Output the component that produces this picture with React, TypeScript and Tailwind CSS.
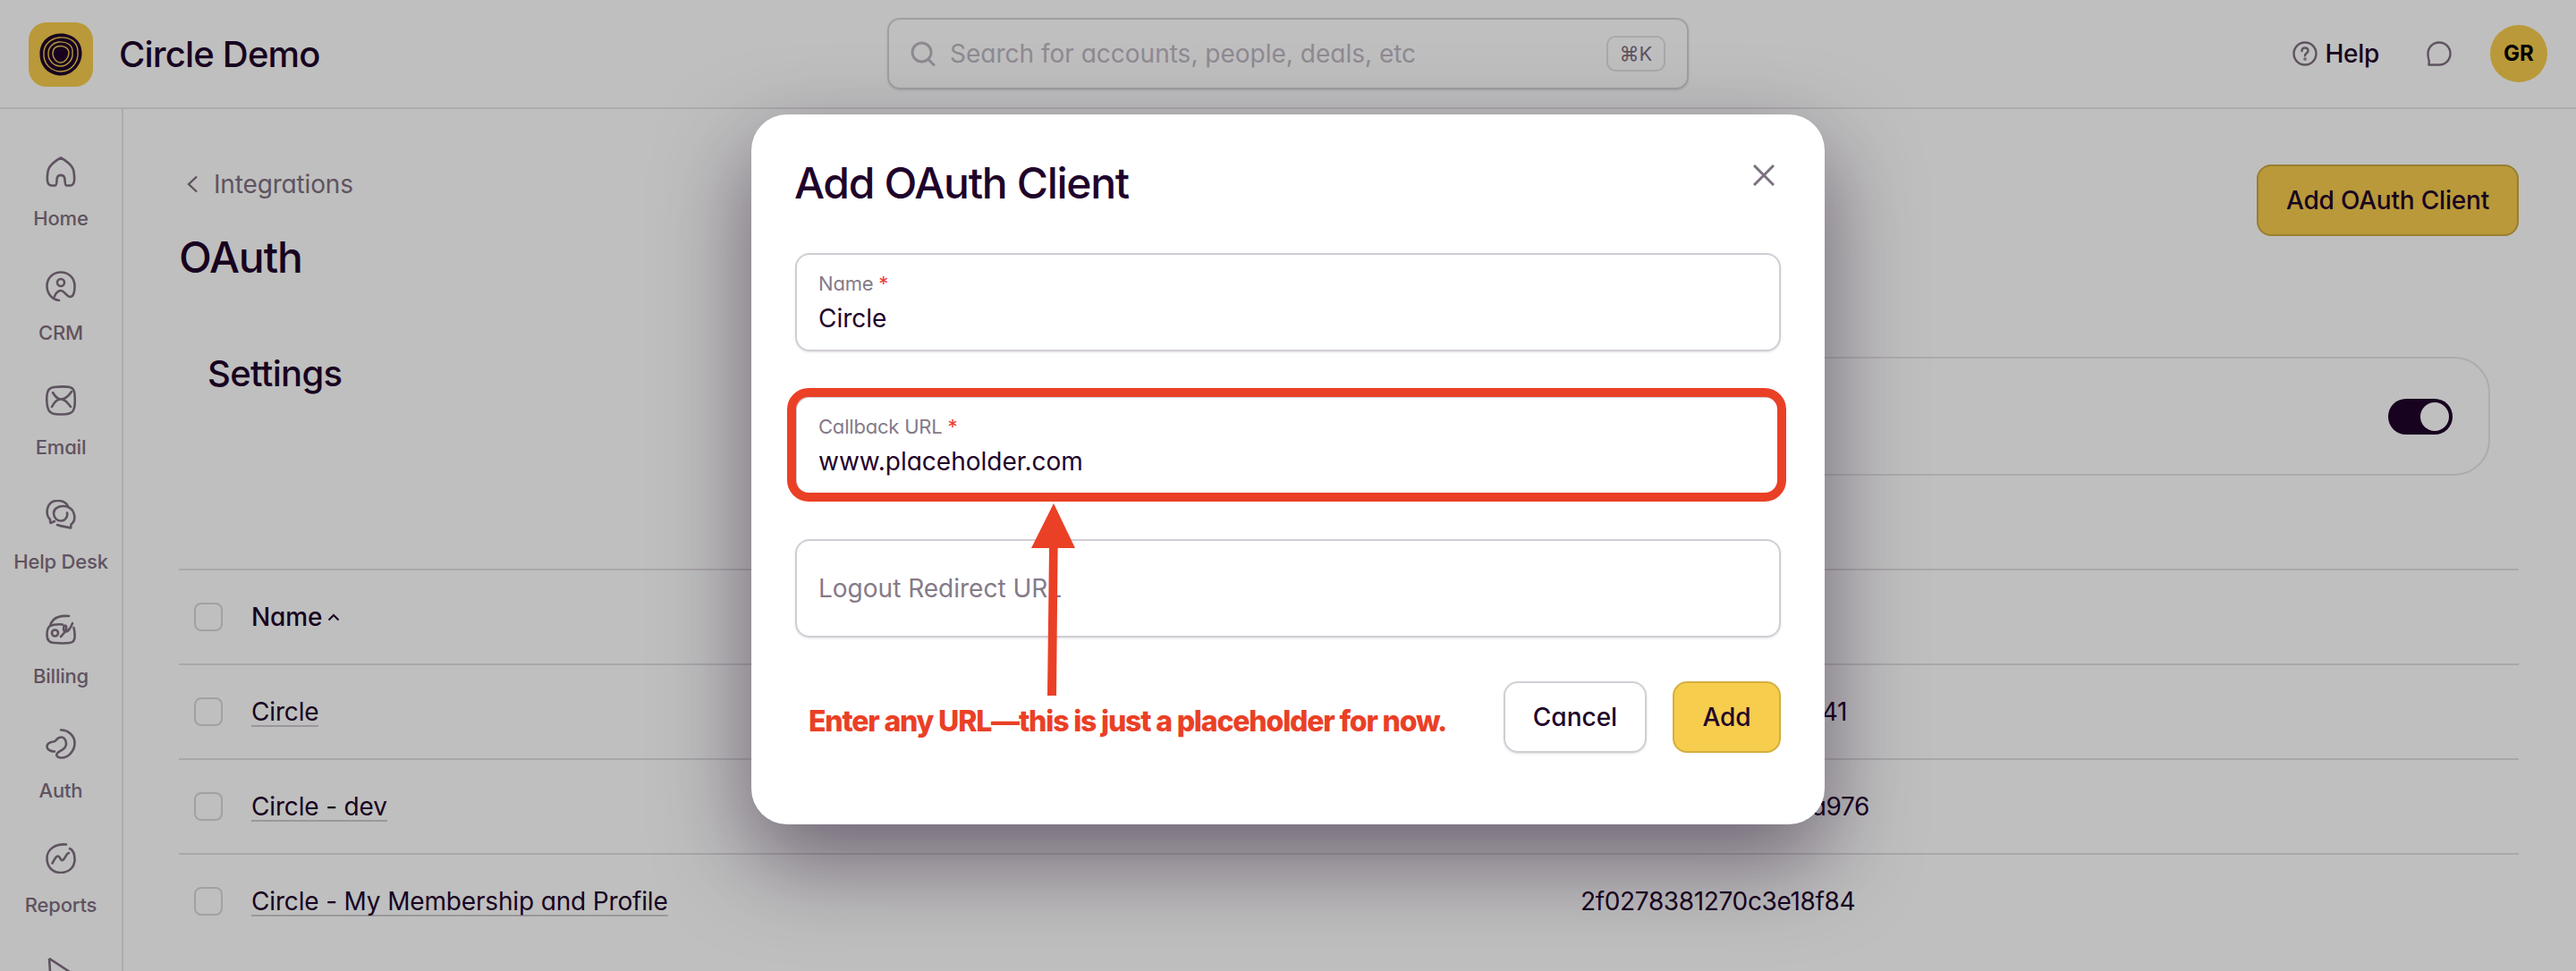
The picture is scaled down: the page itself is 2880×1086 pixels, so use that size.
import { ReactNode } from 'react';

const ICONS: Record<string, ReactNode> = {
  Home: (
    <path d="M17 1.5C12 4 3.5 10 2.5 17C1.5 24 1 32 6 32.5H10.5C13 32.5 12 26 13 23.5C14 20 20 20 21 23.5C22 26 21 32.5 23.5 32.5H28C33 32 32.5 24 31.5 17C30.5 10 22 4 17 1.5Z" />
  ),
  CRM: (
    <>
      <path d="M15 33C7 32 1.5 25 1.5 17C1.5 8 8 1.5 17 1.5C26 1.5 32.5 8 32.5 17C32.5 24 31 29.5 27 29C23 28.5 21 22 17 22C14 22 11 25 10 28.5" />
      <circle cx="17" cy="13" r="4" />
    </>
  ),
  Email: (
    <>
      <path d="M9 2C14 1.5 22 1 27 2C31 3 32.5 7 32.5 11C33 17 33 24 31 28C29 32 24 32.5 17 32.5C10 32.5 6 32 3.5 28C1.5 24 1 17 1.5 11C2 6 4 2.5 9 2Z" />
      <path d="M8 8C11 13 13 15.5 17 15.5C21 15.5 25 13 29 7M7 24C9 20 12 15.5 17 15.5C22 15.5 25 20 28 24" />
    </>
  ),
  'Help Desk': (
    <>
      <path d="M5 22C2 19 1 15 2 10C3.5 4 8 1 13 1C18 1 23 3 25 7M5 22C5 23.5 5 25 5.5 26L10 24" />
      <path d="M13 28C18 30 23 30 28 31.5C28.5 30 28.5 29 28.5 27.5C32 25 33 20 31.5 15C30 10 25 7 20 7C14 7 9 10 9 15C9 20 13 24 18 23.5C22 23 25 19 24 14.5" />
    </>
  ),
  Billing: (
    <>
      <path d="M26 2C20 1.5 13 2 9 6C7 8 5.5 11 5 13C2 15 1.5 19 1.5 23C1.5 28 4 32 10 32C15 32.5 23 32.5 27 32C31 31.5 33 28 32.5 23C32.5 20 32 17 31.5 15" />
      <circle cx="10.5" cy="21" r="3.5" />
      <path d="M5 13C10 11 14 11 19 11.5M17 25C21 21 24 16 23 13.5C22 11.5 20 13 20 16C20 20 24 21 27 16C28.5 13.5 29.5 12 30 10" />
    </>
  ),
  Auth: (
    <path d="M17 1.5C24 1 32.5 7 32.5 16C32.5 25 25 33 17 32.5C12 32 11 29 14 26.5C17 24 23 23 23 17C23 12 20 8 15 10C12 11 12 14 9 14.5C5 15 1.5 17 1.5 20C1.5 23 5 25.5 10 25.5" />
  ),
  Reports: (
    <>
      <path d="M23 1.5C12 0.5 1.5 6 1.5 17C1.5 27 8 33 17 33C26 33 32.5 27 32.5 18C32.5 13 31 8 27 6" />
      <path d="M7.5 22.5C10 18 12 14 14 14.5C16.5 15 16.5 20 19 19C22 18 23 11 26 11" />
    </>
  ),
};

const NavItem = ({ label }: { label: string }) => (
  <div className="flex h-[128px] flex-col items-center">
    <svg viewBox="0 0 34 34" fill="none" stroke="#7f6f80" strokeWidth={2.6} strokeLinecap="round" strokeLinejoin="round" className="h-[34px] w-[34px]">
      {ICONS[label]}
    </svg>
    <span className="mt-[22px] text-[22px] leading-[26px] font-medium tracking-[-0.2px] whitespace-nowrap text-[#7f6f80]">{label}</span>
  </div>
);

// the start of the first two hashes sits behind the modal, so only their tails are written
const Row = ({ name, hash, hashClass, header }: { name: string; hash?: string; hashClass?: string; header?: boolean }) => (
  <div className="grid h-[106px] grid-cols-[1567px_1fr] items-center border-t-2 border-[#e3dfe4] tracking-[-0.16px]">
    <div className="flex items-center pl-[17px]">
      <span className="h-[32px] w-[32px] rounded-[8px] border-2 border-[#dad6dc] bg-white" />
      <div className="ml-[32px] flex items-center gap-[6px]">
        <span className={header ? 'font-medium' : 'mt-[2px] border-b-2 border-[#cfc9d1] leading-[30px]'}>{name}</span>
        {header && (
          <svg viewBox="0 0 14 9" fill="none" stroke="#1f032b" strokeWidth={2} className="h-[9px] w-[14px]">
            <path d="M1.5 7.5L7 2L12.5 7.5" />
          </svg>
        )}
      </div>
    </div>
    <span className={`tracking-[-0.35px] ${hashClass ?? ''}`}>{hash}</span>
  </div>
);

const Field = ({ label, value, children }: { label: string; value: string; children?: ReactNode }) => (
  <div className="relative flex h-[110px] flex-col justify-center rounded-[16px] border-2 border-[#d2cdd4] px-[24px] shadow-sm">
    <span className="text-[22px] leading-[28px] tracking-[-0.2px] text-[#857a88]">
      {label} <span className="text-[#ef3a2e]">*</span>
    </span>
    <span className="mt-[7px] text-[28px] leading-[36px]">{value}</span>
    {children}
  </div>
);

export default function App() {
  return (
    <div className="relative h-[1086px] w-[2880px] overflow-hidden bg-white font-['Inter',sans-serif] text-[28px] text-[#1f032b] [font-feature-settings:'cv11']">
      <header className="flex h-[122px] items-start border-b-2 border-[#e7e5e8]">
        <div className="flex w-[992px] items-center pt-[25px] pl-[32px]">
          <div className="flex h-[72px] w-[72px] items-center justify-center rounded-[20px] bg-[#f7cd4d]">
            <svg viewBox="0 0 48 48" className="h-[48px] w-[48px]" fill="none">
              <path d="M23 0.5C33 0 47.5 6 47.5 22C48 35 37 47.5 24 47.5C12 47.5 0 38 0.5 23C0.5 10 10 1 23 0.5Z" fill="#1f032b" />
              <path d="M22 5C33 4 43 9 43 21C44 33 35 43 24 43C14 43 4 35 5 22C5 13 13 6 22 5Z" stroke="#f7cd4d" strokeWidth={1.4} />
              <path d="M21 10C30 9 38 13 37 22C38 30 31 37 24 37C16 37 10 31 10 23C10 16 15 11 21 10Z" stroke="#f7cd4d" strokeWidth={1.4} />
              <path d="M20 15C27 13 33 17 33 22C33 28 28 33 24 33C19 33 15 28 15 23C15 19 17 16 20 15Z" stroke="#f7cd4d" strokeWidth={1.4} />
            </svg>
          </div>
          <span className="ml-[29px] text-[40px] leading-[72px] font-medium tracking-[-0.8px]">Circle Demo</span>
        </div>
        <div className="mt-[20px] flex h-[80px] w-[896px] items-center rounded-[14px] border-2 border-[#d8d3da] pr-[24px] pl-[24px] shadow-sm">
          <svg viewBox="0 0 28 28" fill="none" stroke="#bfb8c3" strokeWidth={3} strokeLinecap="round" className="h-[28px] w-[28px]">
            <circle cx="12.5" cy="12.5" r="10.5" />
            <path d="M20 20.5L26 26.5" />
          </svg>
          <span className="ml-[16px] flex-1 text-[#bfb8c3]">Search for accounts, people, deals, etc</span>
          <span className="flex h-[40px] w-[66px] items-center justify-center rounded-[10px] border-2 border-[#e3e0e5] text-[22px] text-[#7f6f80]">⌘K</span>
        </div>
        <div className="flex flex-1 items-center justify-end pt-[28px] pr-[32px]">
          <svg viewBox="0 0 28 28" fill="none" stroke="#7f6f80" strokeWidth={2.4} strokeLinecap="round" className="h-[28px] w-[28px]">
            <circle cx="14" cy="14" r="12.5" />
            <path d="M10.5 11C10.5 8.5 12 7.5 14 7.5C16 7.5 17.5 8.8 17.5 10.8C17.5 13.5 14 13.5 14 16.2" />
            <circle cx="14" cy="20" r="0.6" />
          </svg>
          <span className="ml-[9px] font-medium tracking-[-0.3px]">Help</span>
          <svg viewBox="0 0 28 28" fill="none" stroke="#7f6f80" strokeWidth={2.4} strokeLinejoin="round" className="ml-[53px] h-[28px] w-[28px]">
            <path d="M14 1.5C21 1.5 26.5 7 26.5 14C26.5 21 21 26.5 14 26.5C10 26.5 6 26.5 2.5 26.5C3 24 3 21 2 19C1.5 17 1.5 15 1.5 14C1.5 7 7 1.5 14 1.5Z" />
          </svg>
          <span className="ml-[43px] flex h-[64px] w-[64px] items-center justify-center rounded-full bg-[#f7cd4d] text-[24px] font-bold text-black">GR</span>
        </div>
      </header>

      <div className="flex h-[964px]">
        <aside className="w-[138px] shrink-0 border-r-2 border-[#e7e5e8] pt-[53px]">
          {Object.keys(ICONS).map((label) => (
            <NavItem key={label} label={label} />
          ))}
          <div className="flex justify-center">
            <svg viewBox="0 0 34 34" fill="none" stroke="#7f6f80" strokeWidth={2.6} className="h-[34px] w-[34px]">
              <path d="M4 1L30 18M4 1L6 30" />
            </svg>
          </div>
        </aside>

        <main className="flex-1 pt-[62px] pr-[64px] pl-[62px]">
          <div className="flex items-start justify-between">
            <div>
              <div className="mt-[2px] flex h-[40px] items-center pl-[9px] tracking-[-0.16px] text-[#7f6f80]">
                <svg viewBox="0 0 12 20" fill="none" stroke="#7f6f80" strokeWidth={2.4} className="h-[20px] w-[12px]">
                  <path d="M11 1.5L2 10L11 18.5" />
                </svg>
                <span className="ml-[18px]">Integrations</span>
              </div>
              <h1 className="mt-[34px] text-[48px] leading-[56px] font-medium tracking-[-1.1px]">OAuth</h1>
            </div>
            <button className="flex h-[80px] w-[293px] items-center justify-center rounded-[16px] border-2 border-[#cda840] bg-[#f7cd4d] font-medium tracking-[-0.2px]">
              Add OAuth Client
            </button>
          </div>

          <section className="mt-[78px] mb-[104px] flex justify-between px-[32px]">
            <h2 className="text-[40px] leading-[48px] font-medium tracking-[-0.7px]">Settings</h2>
            <div className="mt-[5px] flex h-[133px] w-[1400px] items-center justify-end rounded-[40px] border-2 border-[#e7e5e8] pr-[40px]">
              <span className="flex h-[40px] w-[72px] items-center justify-end rounded-full bg-[#1f032b] pr-[4px]">
                <span className="h-[32px] w-[32px] rounded-full bg-white" />
              </span>
            </div>
          </section>

          <Row name="Name" header />
          <Row name="Circle" hash="41" hashClass="w-[298px] text-right" />
          <Row name="Circle - dev" hash="a976" hashClass="w-[323px] text-right" />
          <Row name="Circle - My Membership and Profile" hash="2f0278381270c3e18f84" />
        </main>
      </div>

      <div className="absolute inset-0 bg-black/25" />

      <div className="absolute top-[128px] left-[840px] h-[794px] w-[1200px] rounded-[40px] bg-white p-[49px] shadow-[0_40px_100px_rgba(30,10,40,0.5)]">
        <div className="flex items-center justify-between">
          <h2 className="-ml-[1px] text-[48px] leading-[56px] font-medium tracking-[-1.3px]">Add OAuth Client</h2>
          <svg viewBox="0 0 24 24" fill="none" stroke="#7c707f" strokeWidth={3} className="mr-[7px] mb-[19px] h-[24px] w-[24px]">
            <path d="M1 1L23 23M23 1L1 23" />
          </svg>
        </div>
        <div className="mt-[50px] flex flex-col gap-[50px]">
          <Field label="Name" value="Circle" />
          <Field label="Callback URL" value="www.placeholder.com">
            <div className="absolute -top-[11px] -right-[8px] -bottom-[10px] -left-[11px] rounded-[24px] border-[10px] border-[#ea4026]" />
          </Field>
          <div className="flex h-[110px] items-center rounded-[16px] border-2 border-[#d2cdd4] px-[24px] text-[#857a88] shadow-sm">
            Logout Redirect URL
          </div>
        </div>
        <div className="mt-[49px] flex justify-end gap-[29px]">
          <button className="h-[80px] w-[160px] rounded-[16px] border-2 border-[#d2cdd4] font-medium shadow-sm">Cancel</button>
          <button className="h-[80px] w-[121px] rounded-[16px] border-2 border-[#d4af3f] bg-[#f7cd4d] font-medium">Add</button>
        </div>

        {/* annotation drawn over the form */}
        <svg viewBox="0 0 50 216" className="absolute top-[435px] left-[313px] h-[216px] w-[50px]">
          <polygon points="25,0 49,50 29.6,50 28,215 18,215 20,50 0,50" fill="#ea4026" />
        </svg>
        <p className="absolute top-[659px] left-[64px] text-[32px] leading-[40px] font-extrabold tracking-[-1.17px] whitespace-nowrap text-[#ea4026] [font-feature-settings:normal]">
          Enter any URL—this is just a placeholder for now.
        </p>
      </div>
    </div>
  );
}
